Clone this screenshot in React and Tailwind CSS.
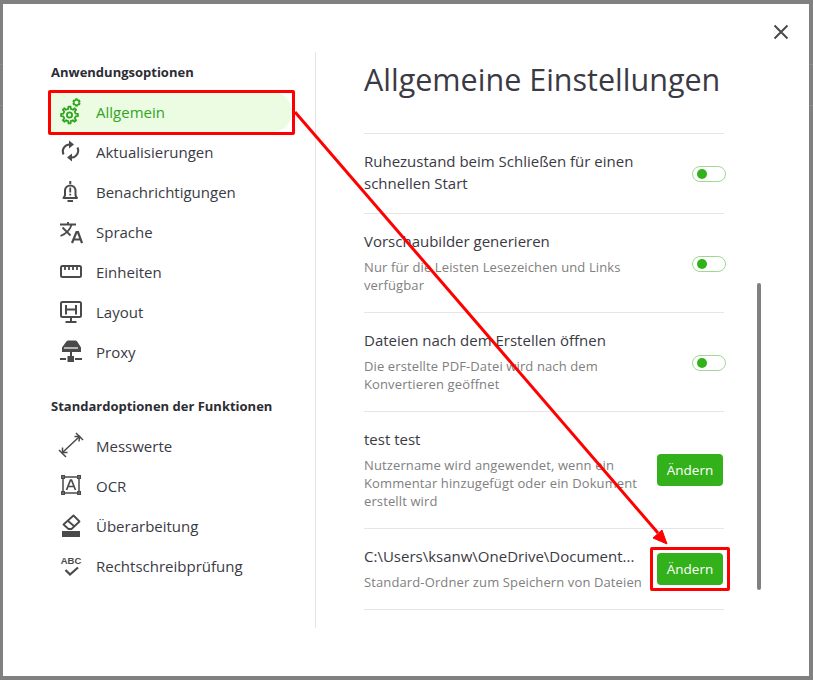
const font = "font-['Open_Sans','Noto_Sans',sans-serif]";
const gray = "#4a4a4a";

// toothed outline for the gear icons
function gearPath(cx, cy, outer, inner, teeth) {
  const step = (Math.PI * 2) / teeth;
  const pts = [];
  for (let i = 0; i < teeth; i++) {
    const a = i * step - Math.PI / 2;
    const w = step * 0.2;
    pts.push([a - w * 1.3, inner], [a - w * 0.8, outer], [a + w * 0.8, outer], [a + w * 1.3, inner]);
  }
  return (
    pts
      .map(([a, r], i) => `${i ? "L" : "M"}${(cx + Math.cos(a) * r).toFixed(2)} ${(cy + Math.sin(a) * r).toFixed(2)}`)
      .join("") + "z"
  );
}

const GearIcon = () => (
  <svg className="overflow-visible" width="24" height="24" viewBox="0 0 24 24" fill="none" stroke="#2fa51f" strokeWidth="1.800" strokeLinejoin="round">
    <path d={gearPath(10.5, 15, 8.5, 6.300, 8)} />
    <circle cx="10.500" cy="15" r="2.600" />
    <path d={gearPath(17.5, 2.5, 3.5, 2.600, 6)} strokeWidth="1.500" />
  </svg>
);

const SyncIcon = () => (
  <svg width="24" height="24" viewBox="0 0 24 24" fill="none" stroke={gray} strokeWidth="2">
    <path d="M4.500 14.500A7 7 0 0 1 10 4.500" />
    <path d="M18.500 7.500A7 7 0 0 1 13 17.500" />
    <path fill={gray} stroke="none" d="M10 0.500L15 4.500L10 8.500zM13 13.500L8 17.500L13 21.500z" />
  </svg>
);

const BellIcon = () => (
  <svg width="24" height="24" viewBox="0 0 24 24" fill="none" stroke={gray} strokeWidth="2">
    <path strokeLinejoin="round" d="M4.500 18h13.500l-1.500-2.500v-5.500a5.300 5.300 0 0 0-10.500 0v5.500z" />
    <path d="M11.250 1v3M8.500 21h5.500" />
    <path d="M11.250 7.500v5M11.250 13.800v1.700" strokeWidth="1.800" />
  </svg>
);

const TranslateIcon = () => (
  <svg width="24" height="24" viewBox="0 0 24 24" fill="none" stroke={gray} strokeWidth="1.800">
    <path d="M1 4.500h16M9 2v2.500M3.500 7.500l8 8M12.500 5C11 9.500 6.500 14 1.500 16" />
    <path strokeWidth="2.200" d="M13 23L17.500 12h1.500L23 23M14.500 19.500h7" />
  </svg>
);

const RulerIcon = () => (
  <svg width="24" height="24" viewBox="0 0 24 24" fill="none" stroke={gray} strokeWidth="2">
    <rect x="2" y="6" width="20" height="11" rx="1.500" />
    <path d="M6 6v4M10 6v4M14 6v4M18 6v4" strokeWidth="1.800" />
  </svg>
);

const LayoutIcon = () => (
  <svg width="24" height="24" viewBox="0 0 24 24" fill="none" stroke={gray} strokeWidth="2">
    <rect x="2" y="2" width="20" height="15" rx="1.500" />
    <path d="M7 5v9.500M17 5v9.500M7 9.500h10M12 17v4M6.500 22h11" />
  </svg>
);

const ProxyIcon = () => (
  <svg width="24" height="24" viewBox="0 0 24 24" fill="none" stroke={gray} strokeWidth="2">
    <path fill={gray} stroke="none" d="M9 0.500h7.500q1.500 0 2 1.500l3.500 5.500V12H3V7.500L7 2q.6-1.500 2-1.500z" />
    <path stroke="#fff" strokeWidth="1.200" d="M5 8h14" />
    <path d="M1 19h6M16 19h7M12 12v4" />
    <path fill={gray} stroke="none" d="M8.500 16h6.500v6H8.500z" />
  </svg>
);

const MeasureIcon = () => (
  <svg className="overflow-visible" width="24" height="24" viewBox="0 0 24 24" fill="none" stroke={gray} strokeWidth="1.500">
    <path d="M3.500 18.500L20.500 2.500M0 16L7 23M17 -1L24 6" />
    <path d="M15.500 2.500L20.500 2.500L20 7.500M3.500 13.500L3.500 18.500L8.500 18.500" />
  </svg>
);

const OcrIcon = () => (
  <svg width="24" height="24" viewBox="0 0 24 24" fill="none" stroke={gray} strokeWidth="1.500">
    <rect x="4" y="3" width="16" height="16" />
    <path fill="#ccc" d="M2.800 1.800h2.500v2.500H2.800zM18.800 1.800h2.500v2.500h-2.500zM2.800 17.800h2.500v2.500H2.800zM18.800 17.800h2.500v2.500h-2.500z" />
    <path strokeWidth="1.700" d="M7.500 16L11.500 6h1L16.500 16M9 12.500h6" />
  </svg>
);

const EraserIcon = () => (
  <svg width="24" height="24" viewBox="0 0 24 24" fill="none" stroke={gray} strokeWidth="1.800">
    <path strokeLinejoin="round" d="M14.500 1.500L20.500 7.500L12.500 15H9.500L4.500 10.500z" />
    <path d="M8.500 6.500L15.500 12.500" />
    <path fill={gray} stroke="none" d="M3 17h18v6H3z" />
  </svg>
);

const AbcIcon = () => (
  <svg width="24" height="24" viewBox="0 0 24 24" fill="none">
    <text x="12" y="9.500" textAnchor="middle" fontSize="9.500" fontWeight="700" fill={gray} fontFamily="Liberation Sans, sans-serif">
      ABC
    </text>
    <path d="M6.500 16L11 20.500L19 13.500" stroke={gray} strokeWidth="2.200" />
  </svg>
);

const appOptions = [
  { label: "Allgemein", icon: <GearIcon />, active: true },
  { label: "Aktualisierungen", icon: <SyncIcon /> },
  { label: "Benachrichtigungen", icon: <BellIcon /> },
  { label: "Sprache", icon: <TranslateIcon /> },
  { label: "Einheiten", icon: <RulerIcon /> },
  { label: "Layout", icon: <LayoutIcon /> },
  { label: "Proxy", icon: <ProxyIcon /> },
];

const featureOptions = [
  { label: "Messwerte", icon: <MeasureIcon /> },
  { label: "OCR", icon: <OcrIcon /> },
  { label: "Überarbeitung", icon: <EraserIcon /> },
  { label: "Rechtschreibprüfung", icon: <AbcIcon /> },
];

function NavItem({ item }) {
  return (
    <div
      className={`flex items-center h-10 w-[241px] pl-[8px] rounded-r-[20px] text-[15px] ${
        item.active ? "bg-[#ebfce3] text-[#2fa51f]" : "text-[#3a3a44]"
      }`}
    >
      {item.icon}
      <span className="ml-[13px]">{item.label}</span>
    </div>
  );
}

function Toggle() {
  return (
    <div className="flex items-center w-[34px] h-[16px] pl-[4px] mt-[4px] -mr-[2px] rounded-full border border-[#9fd893] bg-white shrink-0">
      <div className="w-[10px] h-[10px] rounded-full bg-[#33b11b]" />
    </div>
  );
}

function ChangeButton() {
  return (
    <button className="w-[66px] h-[32px] mt-[2px] mr-px rounded-[4px] bg-[#33b11b] text-white text-[13.5px] font-medium shrink-0">
      Ändern
    </button>
  );
}

function Row({ title, desc, children }) {
  return (
    <div className={`flex items-center justify-between border-b border-[#e6e6e6] pt-[16px] ${desc ? "pb-[18px]" : "pb-[19px]"}`}>
      <div className="w-[285px]">
        <div className="text-[15px] leading-[22px] text-[#3a3a44] whitespace-pre-line">{title}</div>
        {desc && (
          <div className="mt-[6px] text-[13px] leading-[18px] tracking-[0.12px] text-[#808080] whitespace-pre-line">{desc}</div>
        )}
      </div>
      {children}
    </div>
  );
}

export default function App() {
  return (
    <div className={`relative w-[813px] h-[680px] overflow-hidden bg-[#808080] pt-[4px] pl-[3px] ${font}`}>
      <div className="absolute left-0 top-[64px] w-full h-px bg-[#8c8c8c]" />
      <div className="absolute left-0 top-[105px] w-full h-px bg-[#8c8c8c]" />

      <div className="relative flex w-[806px] h-[672px] bg-white pt-[48px]">
        {/* left menu */}
        <div className="w-[313px] h-[576px] border-r border-[#e6e6e6] pl-[48px] pt-[11px]">
          <div className="text-[13px] leading-[18px] font-bold text-[#2c2c34] mb-[11px]">Anwendungsoptionen</div>
          {appOptions.map((item) => (
            <NavItem key={item.label} item={item} />
          ))}
          <div className="mt-[25px] text-[13px] leading-[18px] font-bold text-[#2c2c34] mb-[11px]">
            Standardoptionen der Funktionen
          </div>
          {featureOptions.map((item) => (
            <NavItem key={item.label} item={item} />
          ))}
        </div>

        {/* right content */}
        <div className="w-[360px] ml-[48px]">
          <h1 className="text-[30.5px] leading-[54px] whitespace-nowrap text-[#3a3a44] mb-[27px]">Allgemeine Einstellungen</h1>
          <div className="border-t border-[#e6e6e6]">
            <Row title={"Ruhezustand beim Schließen für einen\nschnellen Start"}>
              <Toggle />
            </Row>
            <Row title="Vorschaubilder generieren" desc={"Nur für die Leisten Lesezeichen und Links\nverfügbar"}>
              <Toggle />
            </Row>
            <Row
              title="Dateien nach dem Erstellen öffnen"
              desc={"Die erstellte PDF-Datei wird nach dem\nKonvertieren geöffnet"}
            >
              <Toggle />
            </Row>
            <Row
              title="test test"
              desc={"Nutzername wird angewendet, wenn ein\nKommentar hinzugefügt oder ein Dokument\nerstellt wird"}
            >
              <ChangeButton />
            </Row>
            <Row title="C:\Users\ksanw\OneDrive\Document..." desc="Standard-Ordner zum Speichern von Dateien">
              <ChangeButton />
            </Row>
          </div>
        </div>

        {/* scrollbar */}
        <div className="absolute left-[754px] top-[279px] w-[4px] h-[307px] rounded-full bg-[#808080]" />

        {/* close */}
        <svg className="absolute left-[770px] top-[20px]" width="16" height="16" viewBox="0 0 16 16" fill="none" stroke={gray} strokeWidth="2">
          <path d="M1.500 1.500L14.500 14.500M14.500 1.500L1.500 14.500" />
        </svg>
      </div>

      {/* annotation overlay */}
      <div className="absolute left-[48px] top-[90px] w-[247px] h-[45px] border-[3px] border-[#ff0000] rounded-[2px]" />
      <div className="absolute left-[650px] top-[547px] w-[80px] h-[44px] border-[3px] border-[#ff0000] rounded-[2px]" />
      <svg className="absolute left-0 top-0 pointer-events-none" width="813" height="680" viewBox="0 0 813 680" fill="none">
        <path d="M295 112L658 533" stroke="#ff0000" strokeWidth="3" />
        <path d="M667 544L653 538L662 530z" fill="#ff0000" stroke="#ff0000" strokeWidth="1" />
      </svg>
    </div>
  );
}
